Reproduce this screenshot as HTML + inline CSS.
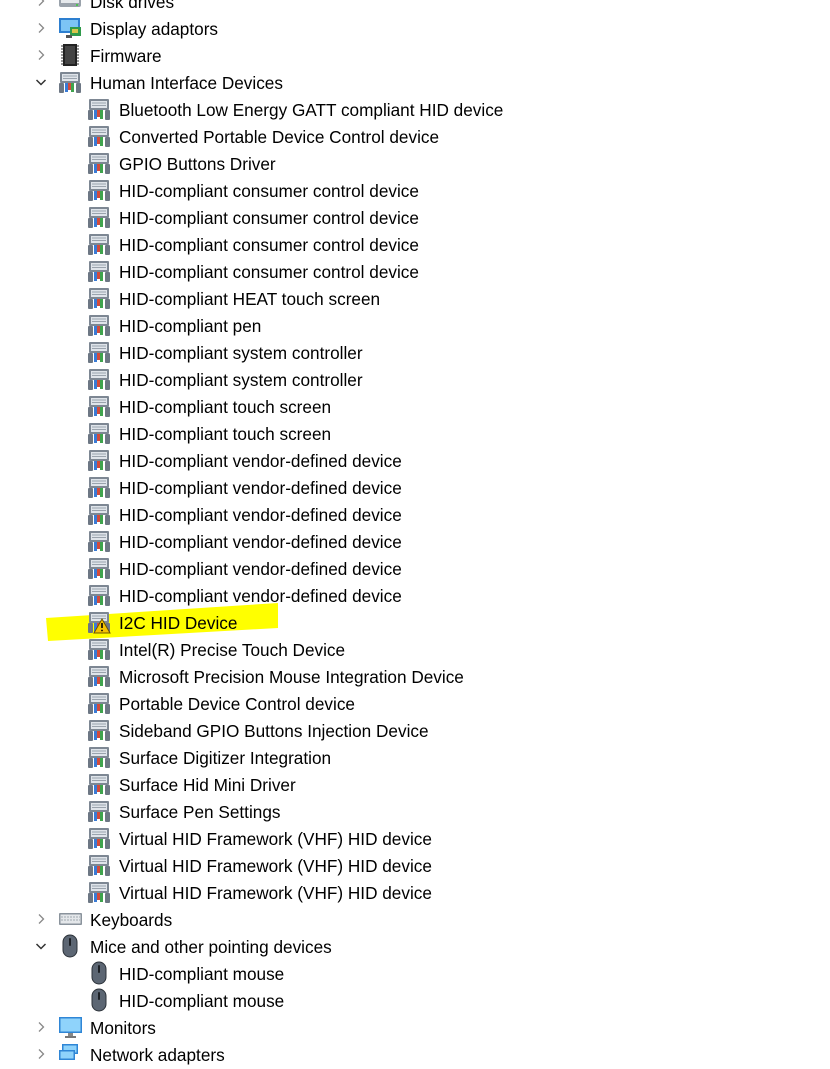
<!DOCTYPE html>
<html><head><meta charset="utf-8"><style>
body{margin:0;width:830px;height:1053px;background:#fff;overflow:hidden;position:relative;font-family:"Liberation Sans",sans-serif;font-size:17.2px;color:#000}
.r{position:absolute;height:27px;line-height:27px;white-space:nowrap}
.ic{position:absolute;width:24px;height:24px}
.ch{position:absolute;width:12px;height:12px}
</style></head><body>
<svg width="0" height="0" style="position:absolute">
<defs>
<symbol id="hid" viewBox="0 0 24 24">
<rect x="2" y="2" width="20" height="11" rx="1" fill="#7d8793"/>
<rect x="4" y="4" width="16" height="7" fill="#dfe4ea"/>
<path d="M5 6h14M5 8.5h14" stroke="#9aa3ad" stroke-width="1"/>
<rect x="1" y="13" width="5" height="10" rx="1" fill="#6d7784"/>
<rect x="18" y="13" width="5" height="10" rx="1" fill="#6d7784"/>
<rect x="7" y="13" width="3" height="9" fill="#3a7bd5"/>
<rect x="10" y="13" width="3" height="7" fill="#d34b3c"/>
<rect x="13" y="13" width="3" height="9" fill="#3fa34d"/>
</symbol>
<symbol id="chr" viewBox="0 0 12 12"><path d="M4 1.5l4.5 4.5-4.5 4.5" fill="none" stroke="#888" stroke-width="1.3"/></symbol>
<symbol id="chd" viewBox="0 0 12 12"><path d="M1.5 4l4.5 4.5 4.5-4.5" fill="none" stroke="#333" stroke-width="1.5"/></symbol>
<symbol id="mouse" viewBox="0 0 24 24"><rect x="5" y="1" width="14" height="22" rx="7" fill="#5c6673" stroke="#2b3138"/><rect x="11" y="4" width="2" height="8" rx="1" fill="#1b1f24"/></symbol>
</defs></svg>

<svg style="position:absolute;left:0;top:0" width="830" height="1053">
<polygon points="46,618 278,603 278,628 48,641" fill="#ffff00"/>
</svg>

<div id="c"></div>
<script>
var rows=[
[1,"Disk drives","disk","r"],
[1,"Display adaptors","disp","r"],
[1,"Firmware","fw","r"],
[1,"Human Interface Devices","hid","d"],
[2,"Bluetooth Low Energy GATT compliant HID device","hid"],
[2,"Converted Portable Device Control device","hid"],
[2,"GPIO Buttons Driver","hid"],
[2,"HID-compliant consumer control device","hid"],
[2,"HID-compliant consumer control device","hid"],
[2,"HID-compliant consumer control device","hid"],
[2,"HID-compliant consumer control device","hid"],
[2,"HID-compliant HEAT touch screen","hid"],
[2,"HID-compliant pen","hid"],
[2,"HID-compliant system controller","hid"],
[2,"HID-compliant system controller","hid"],
[2,"HID-compliant touch screen","hid"],
[2,"HID-compliant touch screen","hid"],
[2,"HID-compliant vendor-defined device","hid"],
[2,"HID-compliant vendor-defined device","hid"],
[2,"HID-compliant vendor-defined device","hid"],
[2,"HID-compliant vendor-defined device","hid"],
[2,"HID-compliant vendor-defined device","hid"],
[2,"HID-compliant vendor-defined device","hid"],
[2,"I2C HID Device","warn"],
[2,"Intel(R) Precise Touch Device","hid"],
[2,"Microsoft Precision Mouse Integration Device","hid"],
[2,"Portable Device Control device","hid"],
[2,"Sideband GPIO Buttons Injection Device","hid"],
[2,"Surface Digitizer Integration","hid"],
[2,"Surface Hid Mini Driver","hid"],
[2,"Surface Pen Settings","hid"],
[2,"Virtual HID Framework (VHF) HID device","hid"],
[2,"Virtual HID Framework (VHF) HID device","hid"],
[2,"Virtual HID Framework (VHF) HID device","hid"],
[1,"Keyboards","kb","r"],
[1,"Mice and other pointing devices","mouse","d"],
[2,"HID-compliant mouse","mouse"],
[2,"HID-compliant mouse","mouse"],
[1,"Monitors","mon","r"],
[1,"Network adapters","net","r"]
];
var icons={
hid:'<use href="#hid"/>',
warn:'<use href="#hid"/><path d="M15 9l8 14h-16z" fill="#f5c400" stroke="#6b5300"/><path d="M15 13v5" stroke="#000" stroke-width="1.6"/><circle cx="15" cy="20.5" r="0.9"/>',
mouse:'<use href="#mouse"/>',
disk:'<rect x="1" y="6" width="22" height="12" rx="2" fill="#9aa2ab"/><rect x="3" y="8" width="18" height="6" fill="#e6e9ec"/><circle cx="19" cy="16" r="1" fill="#3c3"/>',
disp:'<rect x="1" y="2" width="21" height="15" fill="#2d7fd0"/><rect x="3" y="4" width="17" height="11" fill="#7cc4f5"/><rect x="12" y="11" width="11" height="9" fill="#2f9a4a"/><rect x="14" y="13" width="6" height="4" fill="#d9c54a"/><rect x="8" y="19" width="6" height="3" fill="#555"/>',
fw:'<rect x="5" y="1" width="14" height="22" fill="#222"/><path d="M3 3h2M3 6h2M3 9h2M3 12h2M3 15h2M3 18h2M3 21h2M19 3h2M19 6h2M19 9h2M19 12h2M19 15h2M19 18h2M19 21h2" stroke="#777" stroke-width="1.5"/><rect x="7" y="3" width="10" height="18" fill="#444"/>',
kb:'<rect x="1" y="6" width="23" height="12" rx="1" fill="#8a939c"/><rect x="2.5" y="7.5" width="20" height="9" fill="#e4e7ea"/><path d="M3 10h19M3 13h19" stroke="#a0a8b0" stroke-width="1" stroke-dasharray="2 1"/>',
mon:'<rect x="1" y="2" width="23" height="16" fill="#2f86d6"/><rect x="2.5" y="3.5" width="20" height="13" fill="#8fd3fb"/><rect x="10" y="18" width="5" height="3" fill="#888"/><rect x="7" y="21" width="11" height="2" fill="#777"/>',
net:'<rect x="4" y="2" width="16" height="10" fill="#2f86d6"/><rect x="5.5" y="3.5" width="13" height="7" fill="#8fd3fb"/><rect x="1" y="8" width="16" height="10" fill="#2f86d6"/><rect x="2.5" y="9.5" width="13" height="7" fill="#8fd3fb"/>'
};
var h='';
rows.forEach(function(r,i){
 var cy=1+27*i, top=cy-13;
 var lvl=r[0];
 var ix=lvl==1?58:87, tx=lvl==1?90:119;
 if(r[3]) h+='<svg class="ch" style="left:35px;top:'+(cy-6)+'px" viewBox="0 0 12 12"><use href="#'+(r[3]=="d"?"chd":"chr")+'"/></svg>';
 h+='<svg class="ic" style="left:'+ix+'px;top:'+(cy-12)+'px" viewBox="0 0 24 24">'+icons[r[2]]+'</svg>';
 h+='<div class="r" style="left:'+tx+'px;top:'+(top+1)+'px">'+r[1]+'</div>';
});
document.getElementById('c').innerHTML=h;
</script>
</body></html>
